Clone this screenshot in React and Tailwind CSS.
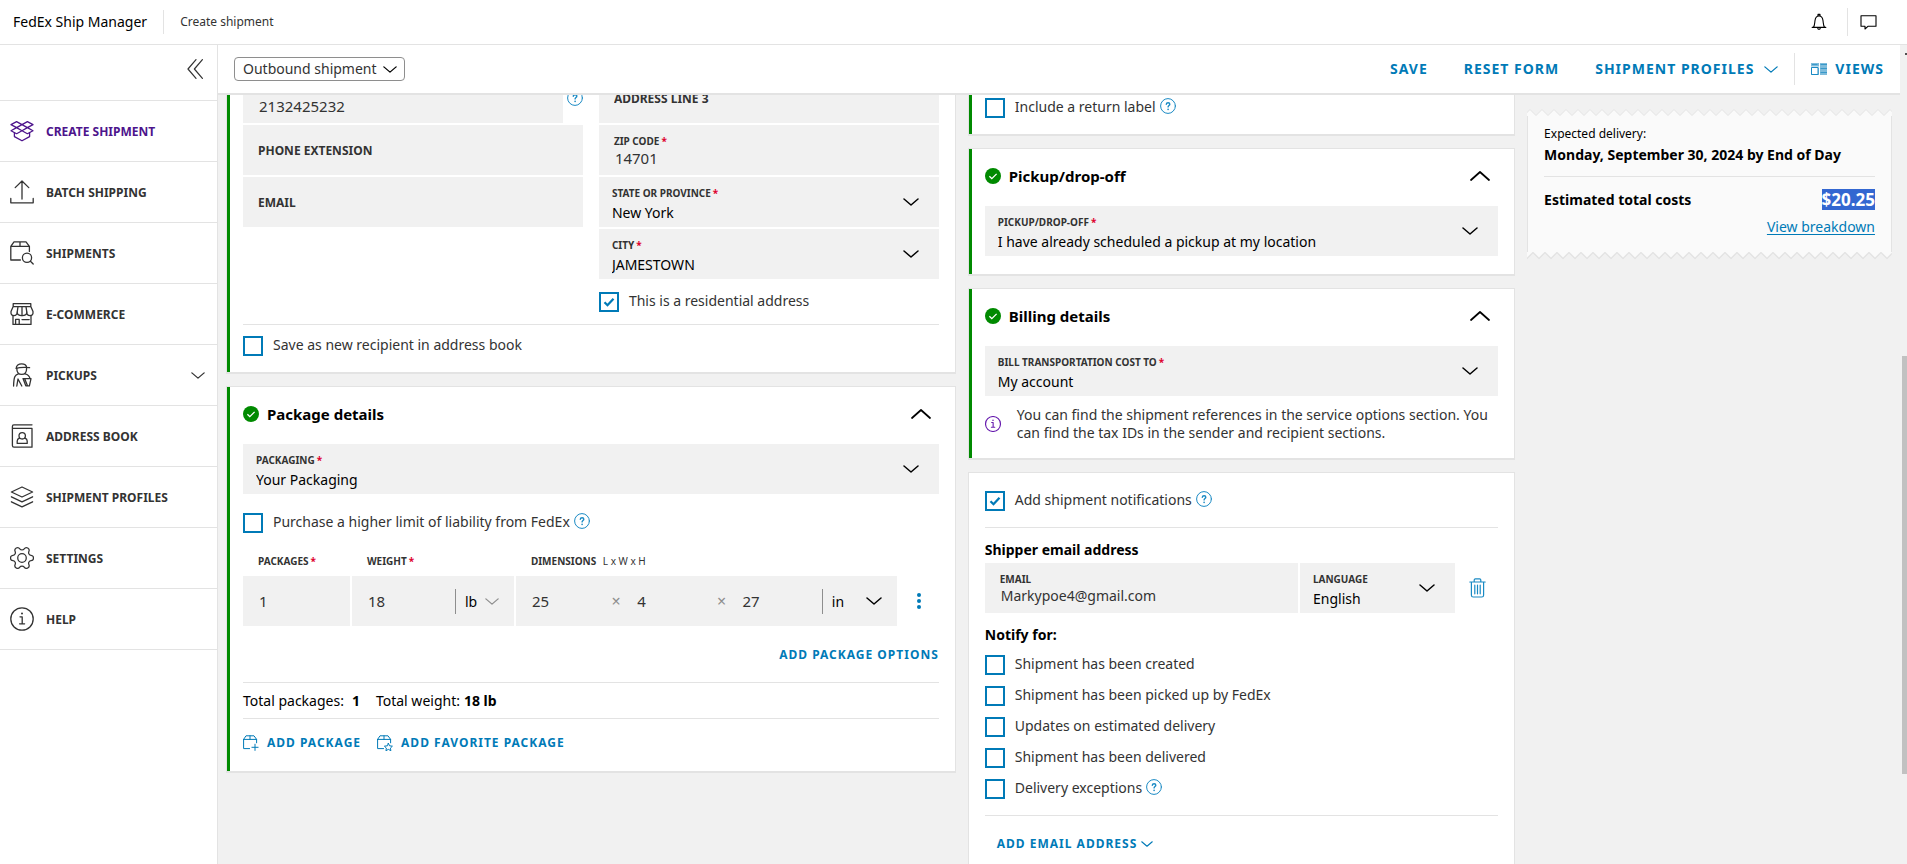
import React, { useId } from "react";

/* ---------- icons ---------- */

function Icon({ children, className = "size-6", box = "0 0 24 24", width = 1.3 }) {
  return (
    <svg
      viewBox={box}
      className={`shrink-0 ${className}`}
      fill="none"
      stroke="currentColor"
      strokeWidth={width}
      strokeLinecap="round"
      strokeLinejoin="round"
      aria-hidden="true"
    >
      {children}
    </svg>
  );
}

const Down = ({ className = "h-2 w-4 text-black" }) => (
  <Icon box="0 0 16 8" className={className} width={1.5}>
    <path d="M1 1l7 6 7-6" />
  </Icon>
);

const Up = () => (
  <Icon box="0 0 20 10" className="h-[10px] w-5 text-black" width={1.7}>
    <path d="M1 9l9-8 9 8" />
  </Icon>
);

const Help = () => (
  <Icon box="0 0 16 16" className="size-4 text-[#1a8ac4]" width={1}>
    <circle cx="8" cy="8" r="7.4" />
    <path strokeWidth="1.4" d="M6.3 6.3c.1-1 .8-1.6 1.8-1.6s1.7.6 1.7 1.5c0 1.3-1.7 1.3-1.7 2.7" />
    <path strokeWidth="1.6" d="M8.1 11.3v.1" />
  </Icon>
);

const GreenTick = () => (
  <svg viewBox="0 0 16 16" className="size-4 shrink-0" aria-hidden="true">
    <circle cx="8" cy="8" r="8" fill="#008a00" />
    <path d="M4.4 8.3l2.4 2.4 4.8-4.8" fill="none" stroke="#fff" strokeWidth="1.3" />
  </svg>
);

const InfoIcon = ({ className, width = 1.3 }) => (
  <Icon className={className} width={width}>
    <circle cx="12" cy="12" r="11.2" />
    <path d="M10 9.8h2.2v7M9.6 16.8h5" />
    <path strokeWidth="2" d="M12 6.4v.2" />
  </Icon>
);

const OpenBox = () => (
  <Icon>
    <path d="M12 5.6L6.6 2.6 1 5.6l5.6 3zM12 5.6l5.4-3 5.6 3-5.6 3zM12 5.6l5.4 3L12 11.7 6.6 8.6zM6.6 8.6L1 11.7l5.6 3 5.4-3zM17.4 8.6l5.6 3.1-5.6 3-5.4-3z" />
    <path d="M4.4 13.6v4l7.6 4.2 7.6-4.2v-4" />
  </Icon>
);

const Upload = () => (
  <Icon>
    <path d="M12 19V1M5.2 7.6L12 1l6.8 6.6M.8 18.4v4.4h22.4v-4.4" />
  </Icon>
);

const BoxSearch = () => (
  <Icon>
    <path d="M.8 5.4V19h9.6M.8 5.4L4 .8h12l3.4 4.6v5M.8 5.4h18.6M10 .8v4.6" />
    <circle cx="17" cy="16.8" r="4.6" />
    <path d="M20.4 20.2l2.8 2.8" />
  </Icon>
);

const Store = () => (
  <Icon>
    <path d="M3.2 1.6h17.6v3H3.2zM3.2 4.6L1 9.6c-.3 2.6.7 4 2.9 4s3.3-1.6 3.3-3.4c0 2 1.8 3.4 4.8 3.4s4.8-1.4 4.8-3.4c0 1.8 1.1 3.4 3.3 3.4s3.2-1.4 2.9-4l-2.2-5" />
    <path d="M8 4.6l-.8 5.6M12 4.6v9M16 4.6l.8 5.6M3 13.4v9h18v-9M5.6 22.4v-5h3.6v5M12 17.6h7.2" />
  </Icon>
);

const Courier = () => (
  <Icon>
    <path d="M6.2 5.4C6.2 2.4 8.6.8 11.6.8c2.8 0 4.8 1.6 5 3.6M6 5.4c3.6-1.2 7.6-1.4 13.6-.8" />
    <path d="M6.8 5.4c0 4 2 6 4.9 6s4.9-2 4.9-6M8.4 10.8C5 11.8 3.800 13.800 3.600 23M15 10.800c3.400.8 4.600 2.400 5 4.800M6.800 23l1.200-7 3.800 7M13 15.600h8l-1.600 7.200h-3.600zM14.600 15.600l2.800 7" />
  </Icon>
);

const AddressBook = () => (
  <Icon>
    <path d="M22 .8H3.8C2.8.8 2.400 1.600 2.400 2.600v18.800c0 1 .6 1.800 1.600 1.800h18V4.400H2.800" />
    <circle cx="12.200" cy="11.800" r="3.200" />
    <path d="M9.400 14.200c-1.600.6-2.200 1.400-2.200 2.800v2.400h10V17c0-1.400-.6-2.200-2.200-2.800" />
  </Icon>
);

const Layers = () => (
  <Icon>
    <path d="M12 2L1.400 7 12 12l10.600-5zM1.400 11.800L12 16.800l10.600-5M1.400 16.800L12 21.800l10.600-5" />
  </Icon>
);

const Gear = () => (
  <Icon box="1.6 1.6 20.8 20.8" className="size-6 rotate-90" width={1.1}>
    <path d="M9.671 4.136a2.34 2.34 0 0 1 4.659 0 2.34 2.34 0 0 0 3.319 1.915 2.34 2.34 0 0 1 2.33 4.033 2.34 2.34 0 0 0 0 3.831 2.34 2.34 0 0 1-2.33 4.033 2.34 2.34 0 0 0-3.319 1.915 2.34 2.34 0 0 1-4.659 0 2.34 2.34 0 0 0-3.32-1.915 2.34 2.34 0 0 1-2.33-4.033 2.34 2.34 0 0 0 0-3.831A2.34 2.34 0 0 1 6.35 6.051a2.34 2.34 0 0 0 3.319-1.915" />
    <circle cx="12" cy="12" r="3.7" />
  </Icon>
);

const Bell = () => (
  <Icon box="0 0 16 18" className="h-[18px] w-4 text-black" width={1.1}>
    <path d="M1.2 14.4h13.6M2.4 14.4c1.4-2 1.2-4 1.6-6.8C4.4 4.6 5.8 3 8 3s3.6 1.6 4 4.6c.4 2.8.2 4.8 1.6 6.8M7 3V1.4h2V3M6.6 14.6c0 2.4 2.8 2.4 2.8 0" />
  </Icon>
);

const Chat = () => (
  <Icon box="0 0 17 15" className="h-[15px] w-[17px] text-black" width={1.1}>
    <path d="M1 .8h15v10.4H8.2L5 14v-2.8H1z" />
  </Icon>
);

const ViewsIcon = () => (
  <svg viewBox="0 0 16 12" className="h-3 w-4 shrink-0" aria-hidden="true">
    <path d="M0 0h16v12H0z" fill="#7fbcdb" />
    <path d="M0 4h8M8.500 0v12" stroke="#fff" strokeWidth="1" />
    <path d="M.5 4.500h6.500v7H.5z" fill="#fff" stroke="#1a8ac4" />
    <path d="M9.500 1.500H16M9.500 5.500H16M9.500 9.500H16M1 1.500h5.500" stroke="#3a99ca" />
  </svg>
);

const PackagePlus = ({ star }) => (
  <Icon box="0 0 16 16" className="size-4 text-[#007ab7]" width={1}>
    <path d="M.6 4.4v9.2h6M.6 4.400L3 .8h8l2.600 3.600v3.400M.6 4.400h13M7 .8v3.600" />
    {star ? (
      <path d="M11.400 8.400l1.200 2.400 2.800.4-2 1.900.5 2.600-2.500-1.300-2.500 1.300.5-2.600-2-1.900 2.800-.4z" />
    ) : (
      <path d="M12 9.200v6.200M8.900 12.300h6.200" />
    )}
  </Icon>
);

const Trash = () => (
  <Icon box="0 0 17 20" className="h-5 w-[17px] text-[#1a8ac4]" width={1.2}>
    <path d="M.8 4h15.400M5.200 3.800V2c0-.8.400-1.200 1.200-1.200h4.200c.8 0 1.200.4 1.200 1.200v1.800M2.400 4v13.200c0 1.200.6 1.800 1.800 1.800h8.600c1.200 0 1.800-.6 1.800-1.800V4M5.800 7.200v8.600M8.500 7.200v8.600M11.200 7.200v8.600" />
  </Icon>
);

/* ---------- form parts ---------- */

const Star = () => <span className="ml-[2px] text-[#de002e]">*</span>;

const FIELD_LABEL = "block text-[10px] leading-[14px] font-bold whitespace-nowrap uppercase text-[#333]";
const BLUE_BUTTON = "flex items-center font-bold tracking-[1px] whitespace-nowrap text-[#007ab7]";

function SelectField({ label, value, required = true }) {
  const id = useId();
  return (
    <div className="relative h-[50px] min-w-0 bg-[#f1f1f1] pt-[9px]">
      <label htmlFor={id} className={`${FIELD_LABEL} pl-[13px]`}>
        {label}
        {required && <Star />}
      </label>
      <select
        id={id}
        className="mt-[3px] block h-5 w-full appearance-none bg-transparent pr-10 pl-[13px] text-sm leading-5 text-black"
      >
        <option>{value}</option>
      </select>
      <div className="pointer-events-none absolute top-[21px] right-5">
        <Down />
      </div>
    </div>
  );
}

function TextField({ label, value, required = false, size = "text-[15px]" }) {
  const id = useId();
  return (
    <div className="h-[50px] min-w-0 bg-[#f1f1f1] pt-[9px]">
      <label htmlFor={id} className={`${FIELD_LABEL} pl-[15px]`}>
        {label}
        {required && <Star />}
      </label>
      <input
        id={id}
        defaultValue={value}
        className={`block h-5 w-full bg-transparent pl-4 leading-5 text-[#333] ${size}`}
      />
    </div>
  );
}

function EmptyField({ label }) {
  return (
    <input
      aria-label={label}
      placeholder={label}
      className="block h-[50px] w-full min-w-0 bg-[#f1f1f1] pl-[15px] text-xs font-bold placeholder:text-[#333] placeholder:opacity-100"
    />
  );
}

function Check({ label, checked = false, help = false }) {
  return (
    <div className="flex h-5 items-start">
      <label className="flex items-start">
        <span className="relative mr-[10px] size-5">
          <input
            type="checkbox"
            defaultChecked={checked}
            className="peer block size-5 appearance-none border-2 border-[#007ab7] bg-white"
          />
          <svg
            viewBox="0 0 20 20"
            className="pointer-events-none absolute inset-0 hidden size-5 peer-checked:block"
            aria-hidden="true"
          >
            <path d="M5.5 10.2l3 3 6-6.4" fill="none" stroke="#007ab7" strokeWidth="2.3" />
          </svg>
        </span>
        <span className="text-sm leading-[18px] whitespace-nowrap">{label}</span>
      </label>
      {help && (
        <button type="button" aria-label="Help" className="ml-1">
          <Help />
        </button>
      )}
    </div>
  );
}

function Card({ children, done = true, className = "" }) {
  return (
    <section className="border border-b-2 border-[#e3e3e3] bg-white">
      <div className={`pr-4 ${done ? "border-l-[3px] border-[#008a00] pl-[13px]" : "pl-4"} ${className}`}>
        {children}
      </div>
    </section>
  );
}

function CardTitle({ children }) {
  return (
    <header className="mb-1 flex h-[53px] items-center gap-2">
      <GreenTick />
      <h2 className="flex-1 text-[15px] leading-5 font-bold text-black">{children}</h2>
      <button type="button" aria-label="Collapse" className="mr-2">
        <Up />
      </button>
    </header>
  );
}

function UnitSelect({ label, value, muted = false }) {
  return (
    <div
      className={`relative flex h-[25px] items-center border-l border-[#8e8e8e] ${muted ? "w-[59px]" : "w-[75px]"}`}
    >
      <select
        aria-label={label}
        className="h-[25px] w-full appearance-none bg-transparent pl-[9px] text-sm leading-[25px] text-black"
      >
        <option>{value}</option>
      </select>
      <div className="pointer-events-none absolute right-[15px]">
        <Down className={muted ? "h-[7px] w-[14px] text-[#8e8e8e]" : "h-2 w-4 text-black"} />
      </div>
    </div>
  );
}

const Amount = ({ label, value }) => (
  <input
    aria-label={label}
    defaultValue={value}
    className="h-[50px] w-0 min-w-0 flex-1 bg-transparent pl-4 text-[15px] text-[#333]"
  />
);

const Times = () => <span className="w-[10px] text-center text-base text-[#8e8e8e]">×</span>;

/* ---------- page regions ---------- */

const NAV = [
  ["Create shipment", <OpenBox />],
  ["Batch shipping", <Upload />],
  ["Shipments", <BoxSearch />],
  ["E-commerce", <Store />],
  ["Pickups", <Courier />],
  ["Address book", <AddressBook />],
  ["Shipment profiles", <Layers />],
  ["Settings", <Gear />],
  ["Help", <InfoIcon className="size-6" />],
];

function Sidebar() {
  return (
    <aside className="w-[218px] shrink-0 border-r border-[#e3e3e3] bg-white">
      <div className="flex h-14 items-center justify-end border-b border-[#e3e3e3] pr-[14px] pb-[7px]">
        <button type="button" aria-label="Collapse menu">
          <Icon box="0 0 16 20" className="h-5 w-4" width={1.2}>
            <path d="M9 .6L1 10l8 9.400M15.400.6L7.400 10l8 9.400" />
          </Icon>
        </button>
      </div>
      <nav>
        {NAV.map(([name, icon], i) => (
          <a
            key={name}
            href="#"
            className={`flex h-[61px] items-center gap-3 border-b border-[#e3e3e3] pr-3 pl-[10px] ${
              i === 0 ? "text-[#4d148c]" : ""
            }`}
          >
            {icon}
            <span className="flex-1 pt-[2px] text-xs font-bold uppercase">{name}</span>
            {name === "Pickups" && <Down className="h-[7px] w-[14px]" />}
          </a>
        ))}
      </nav>
    </aside>
  );
}

function Toolbar() {
  return (
    <div className="flex h-[50px] shrink-0 items-center border-b-2 border-[#e3e3e3] bg-white pl-4">
      <div className="relative flex items-center">
        <select
          aria-label="Shipment direction"
          className="h-6 w-[171px] appearance-none rounded-[4px] border border-[#8e8e8e] bg-white pl-2 text-sm leading-[22px]"
        >
          <option>Outbound shipment</option>
        </select>
        <div className="pointer-events-none absolute right-2">
          <Down className="h-[7px] w-[14px] text-black" />
        </div>
      </div>
      <div className="ml-auto flex items-center text-sm">
        <button type="button" className={`${BLUE_BUTTON} mr-9`}>SAVE</button>
        <button type="button" className={`${BLUE_BUTTON} mr-9`}>RESET FORM</button>
        <button type="button" className={`${BLUE_BUTTON} mr-4 gap-[10px]`}>
          SHIPMENT PROFILES
          <Down className="h-[7px] w-[14px]" />
        </button>
        <button type="button" className={`${BLUE_BUTTON} h-8 gap-2 border-l border-[#e3e3e3] pr-4 pl-4`}>
          <ViewsIcon />
          VIEWS
        </button>
      </div>
    </div>
  );
}

function RecipientCard() {
  return (
    <Card className="pt-3 pb-4">
      <div className="grid grid-cols-2 gap-4">
        <div className="flex flex-col gap-[2px]">
          <div className="flex items-center gap-1">
            <input
              aria-label="Phone number"
              defaultValue="2132425232"
              className="block h-[50px] min-w-0 flex-1 bg-[#f1f1f1] pt-4 pl-4 text-[15px] text-[#333]"
            />
            <button type="button" aria-label="Help">
              <Help />
            </button>
          </div>
          <EmptyField label="PHONE EXTENSION" />
          <EmptyField label="EMAIL" />
        </div>
        <div className="flex flex-col gap-[2px]">
          <EmptyField label="ADDRESS LINE 3" />
          <TextField label="ZIP code" value="14701" required />
          <SelectField label="State or province" value="New York" />
          <SelectField label="City" value="JAMESTOWN" />
          <div className="mt-[11px]">
            <Check label="This is a residential address" checked />
          </div>
        </div>
      </div>
      <hr className="mt-3 mb-[11px] border-[#e3e3e3]" />
      <Check label="Save as new recipient in address book" />
    </Card>
  );
}

function PackageCard() {
  return (
    <Card className="pb-1">
      <CardTitle>Package details</CardTitle>
      <SelectField label="Packaging" value="Your Packaging" />
      <div className="mt-[19px] mb-[21px]">
        <Check label="Purchase a higher limit of liability from FedEx" help />
      </div>
      <div className="grid grid-cols-[107fr_162fr_381fr_40px] gap-[2px]">
        <div>
          <div className={`${FIELD_LABEL} mb-2 pl-[15px]`}>Packages<Star /></div>
          <div className="flex bg-[#f1f1f1]">
            <Amount label="Packages" value="1" />
          </div>
        </div>
        <div>
          <div className={`${FIELD_LABEL} mb-2 pl-[15px]`}>Weight<Star /></div>
          <div className="flex items-center bg-[#f1f1f1]">
            <Amount label="Weight" value="18" />
            <UnitSelect label="Weight unit" value="lb" muted />
          </div>
        </div>
        <div>
          <div className={`${FIELD_LABEL} mb-2 pl-[15px]`}>
            Dimensions <span className="ml-1 font-normal normal-case">L x W x H</span>
          </div>
          <div className="flex items-center bg-[#f1f1f1]">
            <Amount label="Length" value="25" />
            <Times />
            <Amount label="Width" value="4" />
            <Times />
            <Amount label="Height" value="27" />
            <UnitSelect label="Dimension unit" value="in" />
          </div>
        </div>
        <button
          type="button"
          aria-label="More options"
          className="flex h-[50px] flex-col items-center justify-center gap-[2px] self-end"
        >
          <span className="size-1 rounded-full bg-[#007ab7]" />
          <span className="size-1 rounded-full bg-[#007ab7]" />
          <span className="size-1 rounded-full bg-[#007ab7]" />
        </button>
      </div>
      <div className="mt-5 mb-[18px] flex justify-end">
        <button type="button" className={`${BLUE_BUTTON} text-xs leading-[18px]`}>ADD PACKAGE OPTIONS</button>
      </div>
      <div className="flex h-[37px] items-center gap-4 border-y border-[#e3e3e3] text-sm text-black">
        <p className="flex gap-2">Total packages: <b>1</b></p>
        <p className="flex gap-1">Total weight: <b>18 lb</b></p>
      </div>
      <div className="flex h-12 items-center gap-4">
        <button type="button" className={`${BLUE_BUTTON} gap-2 text-xs`}>
          <PackagePlus />
          ADD PACKAGE
        </button>
        <button type="button" className={`${BLUE_BUTTON} gap-2 text-xs`}>
          <PackagePlus star />
          ADD FAVORITE PACKAGE
        </button>
      </div>
    </Card>
  );
}

function NotificationsCard() {
  return (
    <Card done={false} className="pt-[18px] pb-6">
      <Check label="Add shipment notifications" checked help />
      <hr className="mt-4 mb-[13px] border-[#e3e3e3]" />
      <h3 className="mb-1 text-sm leading-[18px] font-bold text-black">Shipper email address</h3>
      <div className="grid grid-cols-[313fr_155fr_41px] gap-[2px]">
        <TextField label="Email" value="Markypoe4@gmail.com" size="text-sm" />
        <SelectField label="Language" value="English" required={false} />
        <button type="button" aria-label="Delete" className="flex items-center justify-center">
          <Trash />
        </button>
      </div>
      <h3 className="mt-[13px] mb-[11px] text-sm leading-[18px] font-bold text-black">Notify for:</h3>
      <div className="flex flex-col gap-[11px]">
        <Check label="Shipment has been created" />
        <Check label="Shipment has been picked up by FedEx" />
        <Check label="Updates on estimated delivery" />
        <Check label="Shipment has been delivered" />
        <Check label="Delivery exceptions" help />
      </div>
      <hr className="mt-4 mb-[19px] border-[#e3e3e3]" />
      <button type="button" className={`${BLUE_BUTTON} ml-3 gap-1 text-xs leading-[18px]`}>
        ADD EMAIL ADDRESS
        <Down className="h-[6px] w-3" />
      </button>
    </Card>
  );
}

function Receipt() {
  return (
    <section className="mt-[49px]">
      <svg className="block h-[7px] w-full" aria-hidden="true">
        <pattern id="teeth-top" width="12" height="7" patternUnits="userSpaceOnUse">
          <path d="M-3 6.5L3 .5l6 6 6-6V8H-3z" fill="#fafafa" />
          <path d="M-3 6.5L3 .5l6 6 6-6" fill="none" stroke="#e3e3e3" />
        </pattern>
        <rect width="100%" height="7" fill="url(#teeth-top)" />
      </svg>
      <div className="border-x border-[#e3e3e3] bg-[#fafafa] px-4 pt-[10px] pb-4 text-black">
        <p className="text-xs leading-4">Expected delivery:</p>
        <p className="mt-1 text-sm leading-[18px] font-bold whitespace-nowrap">Monday, September 30, 2024 by End of Day</p>
        <hr className="my-3 border-[#e3e3e3]" />
        <div className="flex items-center justify-between">
          <span className="text-sm leading-[21px] font-bold">Estimated total costs</span>
          <span className="bg-[#3367d1] text-[17px] leading-[21px] font-bold text-white">$20.25</span>
        </div>
        <div className="mt-2 flex justify-end">
          <a href="#" className="text-sm leading-[18px] text-[#007ab7] underline underline-offset-2">View breakdown</a>
        </div>
      </div>
      <svg className="block h-[8px] w-full" aria-hidden="true">
        <pattern id="teeth-bottom" width="12" height="8" patternUnits="userSpaceOnUse">
          <path d="M0 0v6.5l6-6 6 6V0z" fill="#fafafa" />
          <path d="M-6 .5l6 6 6-6 6 6 6-6" fill="none" stroke="#e3e3e3" strokeWidth="1.3" />
        </pattern>
        <rect width="100%" height="8" fill="url(#teeth-bottom)" />
      </svg>
    </section>
  );
}

export default function App() {
  return (
    <div className="flex h-screen flex-col overflow-hidden bg-[#f1f1f1] font-['Noto_Sans',sans-serif] text-[#333]">
      <header className="flex h-[45px] shrink-0 items-center border-b border-[#e3e3e3] bg-white pl-[13px]">
        <h1 className="text-sm text-black">FedEx Ship Manager</h1>
        <span className="ml-4 h-6 w-px bg-[#e3e3e3]" />
        <span className="ml-4 text-xs">Create shipment</span>
        <button type="button" aria-label="Notifications" className="ml-auto">
          <Bell />
        </button>
        <div className="ml-5 flex h-7 items-center border-l border-[#e3e3e3] pr-[30px] pl-3">
          <button type="button" aria-label="Messages">
            <Chat />
          </button>
        </div>
      </header>
      <div className="flex min-h-0 flex-1">
        <Sidebar />
        <div className="flex min-w-0 flex-1 flex-col">
          <Toolbar />
          <main className="min-h-0 flex-1 overflow-hidden px-2">
            <div className="-mt-[35px] grid grid-cols-[4fr_3fr_2fr] items-start gap-3">
              <div className="flex flex-col gap-3">
                <RecipientCard />
                <PackageCard />
              </div>
              <div className="flex flex-col gap-3">
                <Card className="pt-[37px] pb-4">
                  <Check label="Include a return label" help />
                </Card>
                <Card className="pb-[18px]">
                  <CardTitle>Pickup/drop-off</CardTitle>
                  <SelectField label="Pickup/drop-off" value="I have already scheduled a pickup at my location" />
                </Card>
                <Card className="pb-4">
                  <CardTitle>Billing details</CardTitle>
                  <SelectField label="Bill transportation cost to" value="My account" />
                  <div className="mt-[10px] flex items-center gap-4">
                    <InfoIcon className="size-4 text-[#671cae]" width={1.7} />
                    <p className="text-sm leading-[18px]">
                      You can find the shipment references in the service options section. You can find the tax IDs in
                      the sender and recipient sections.
                    </p>
                  </div>
                </Card>
                <NotificationsCard />
              </div>
              <Receipt />
            </div>
          </main>
        </div>
        <div className="flex w-[7px] flex-col items-end bg-[#f1f1f1]">
          <div className="h-[38%] w-full pt-2">
            <span className="ml-auto block h-[2px] w-[2px] bg-[#505050]" />
          </div>
          <div className="h-[51%] w-[5px] bg-[#c1c1c1]" />
        </div>
      </div>
    </div>
  );
}
